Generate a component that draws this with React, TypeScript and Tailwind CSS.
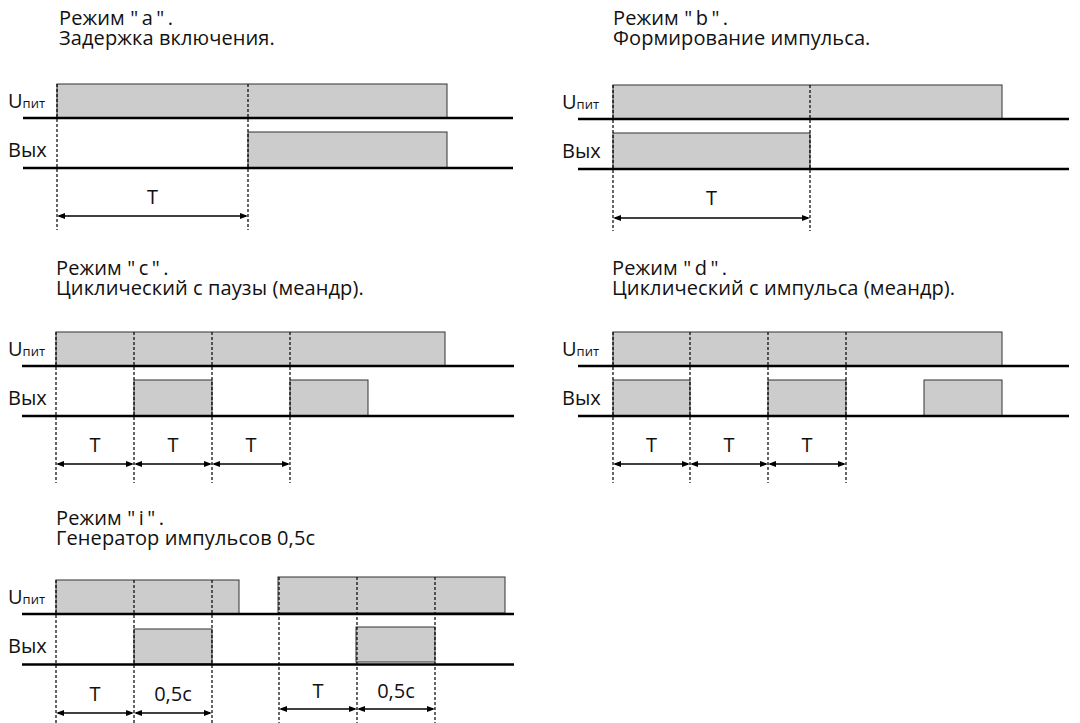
type Box = { x1: number; x2: number; top: number; bottom: number }
type Span = { x1: number; x2: number; y: number; label: string; ty: number }

interface ChartProps {
  width: number
  lineX: [number, number]
  upLine: number
  outLine: number
  up: Box[]
  out: Box[]
  dashes: { x: number; from: number }[]
  dashEnd: number
  spans: Span[]
  labelX: number
  labelDy?: number
}

function ArrowSpan({ x1, x2, y, label, ty }: Span) {
  const h = 8
  const w = 3
  return (
    <g>
      <line x1={x1 + 2} y1={y} x2={x2 - 2} y2={y} stroke="#000" strokeWidth={1.3} />
      <polygon points={`${x1},${y} ${x1 + h},${y - w} ${x1 + h},${y + w}`} fill="#000" />
      <polygon points={`${x2},${y} ${x2 - h},${y - w} ${x2 - h},${y + w}`} fill="#000" />
      <text x={(x1 + x2) / 2} y={ty} textAnchor="middle" fontSize={20} fill="#111">
        {label}
      </text>
    </g>
  )
}

function TimingChart(p: ChartProps) {
  const dy = p.labelDy ?? 0
  return (
    <svg
      width={p.width}
      height={184}
      viewBox={`0 64 ${p.width} 184`}
      className="block shrink-0 overflow-hidden font-['Open_Sans',sans-serif]"
    >
      {[...p.up, ...p.out].map((b, i) => (
        <rect
          key={i}
          x={b.x1}
          y={b.top}
          width={b.x2 - b.x1}
          height={b.bottom - b.top}
          fill="#cccccc"
          stroke="#333"
          strokeWidth={1}
        />
      ))}
      {p.dashes.map((d, i) => (
        <line
          key={i}
          x1={d.x}
          y1={d.from}
          x2={d.x}
          y2={p.dashEnd}
          stroke="#000"
          strokeWidth={1.2}
          strokeDasharray="3 2"
        />
      ))}
      <line x1={p.lineX[0]} y1={p.upLine} x2={p.lineX[1]} y2={p.upLine} stroke="#000" strokeWidth={2.5} />
      <line x1={p.lineX[0]} y1={p.outLine} x2={p.lineX[1]} y2={p.outLine} stroke="#000" strokeWidth={2.5} />
      {p.spans.map((s, i) => (
        <ArrowSpan key={i} {...s} />
      ))}
      <text x={p.labelX} y={108 + dy} fontSize={20} fill="#111">
        U<tspan fontSize={13}>пит</tspan>
      </text>
      <text x={p.labelX} y={157 + dy} fontSize={20} fill="#111">
        Вых
      </text>
    </svg>
  )
}

function Title({ mode, text, className }: { mode: string; text: string; className: string }) {
  return (
    <div className={`h-[64px] shrink-0 text-[20px] leading-[20px] tracking-[0.1px] text-[#111] ${className}`}>
      <div>{`Режим "\u2009${mode}\u2009"\u2009.`}</div>
      <div>{text}</div>
    </div>
  )
}

export default function App() {
  return (
    <div className="w-[1080px] h-[723px] overflow-hidden bg-white font-['Open_Sans',sans-serif] grid grid-cols-[556px_524px] grid-rows-[248px_248px_248px]">
      {/* режим a */}
      <div className="flex flex-col">
        <Title mode="a" text="Задержка включения." className="pt-[8px] pl-[59px]" />
        <TimingChart
          width={556}
          lineX={[23, 513]}
          upLine={118}
          outLine={168}
          up={[{ x1: 57, x2: 447, top: 84, bottom: 118 }]}
          out={[{ x1: 248, x2: 447, top: 132, bottom: 168 }]}
          dashes={[
            { x: 57, from: 84 },
            { x: 248, from: 84 },
          ]}
          dashEnd={230}
          spans={[{ x1: 57, x2: 248, y: 216, label: "T", ty: 204 }]}
          labelX={8}
        />
      </div>

      {/* режим b */}
      <div className="flex flex-col">
        <Title mode="b" text="Формирование импульса." className="pt-[8px] pl-[57px]" />
        <TimingChart
          width={524}
          lineX={[22, 513]}
          upLine={119}
          outLine={169}
          up={[{ x1: 57, x2: 446, top: 85, bottom: 119 }]}
          out={[{ x1: 57, x2: 254, top: 133, bottom: 169 }]}
          dashes={[
            { x: 57, from: 85 },
            { x: 254, from: 85 },
          ]}
          dashEnd={231}
          spans={[{ x1: 57, x2: 254, y: 218, label: "T", ty: 205 }]}
          labelX={6}
          labelDy={1}
        />
      </div>

      {/* режим c */}
      <div className="flex flex-col">
        <Title mode="с" text="Циклический с паузы (меандр)." className="pt-[10px] pl-[56px]" />
        <TimingChart
          width={556}
          lineX={[22, 514]}
          upLine={118}
          outLine={168}
          up={[{ x1: 56, x2: 445, top: 84, bottom: 118 }]}
          out={[
            { x1: 134, x2: 212, top: 132, bottom: 168 },
            { x1: 290, x2: 368, top: 132, bottom: 168 },
          ]}
          dashes={[56, 134, 212, 290].map((x) => ({ x, from: 84 }))}
          dashEnd={235}
          spans={[
            { x1: 56, x2: 134, y: 216, label: "T", ty: 204 },
            { x1: 134, x2: 212, y: 216, label: "T", ty: 204 },
            { x1: 212, x2: 290, y: 216, label: "T", ty: 204 },
          ]}
          labelX={8}
        />
      </div>

      {/* режим d */}
      <div className="flex flex-col">
        <Title mode="d" text="Циклический с импульса (меандр)." className="pt-[10px] pl-[56px]" />
        <TimingChart
          width={524}
          lineX={[22, 513]}
          upLine={118}
          outLine={168}
          up={[{ x1: 57, x2: 446, top: 84, bottom: 118 }]}
          out={[
            { x1: 57, x2: 134, top: 132, bottom: 168 },
            { x1: 212, x2: 290, top: 132, bottom: 168 },
            { x1: 368, x2: 446, top: 132, bottom: 168 },
          ]}
          dashes={[57, 134, 212, 290].map((x) => ({ x, from: 84 }))}
          dashEnd={235}
          spans={[
            { x1: 57, x2: 134, y: 216, label: "T", ty: 204 },
            { x1: 134, x2: 212, y: 216, label: "T", ty: 204 },
            { x1: 212, x2: 290, y: 216, label: "T", ty: 204 },
          ]}
          labelX={6}
        />
      </div>

      {/* режим i */}
      <div className="flex flex-col">
        <Title mode="i" text="Генератор импульсов 0,5с" className="pt-[12px] pl-[56px]" />
        <TimingChart
          width={556}
          lineX={[22, 514]}
          upLine={118}
          outLine={168.5}
          up={[
            { x1: 56, x2: 239, top: 84, bottom: 118 },
            { x1: 278, x2: 505, top: 81, bottom: 117 },
          ]}
          out={[
            { x1: 134, x2: 212, top: 133, bottom: 168 },
            { x1: 356, x2: 435, top: 131, bottom: 166 },
          ]}
          dashes={[
            { x: 56, from: 84 },
            { x: 134, from: 84 },
            { x: 212, from: 84 },
            { x: 279, from: 81 },
            { x: 357, from: 81 },
            { x: 435, from: 81 },
          ]}
          dashEnd={240}
          spans={[
            { x1: 56, x2: 134, y: 217, label: "T", ty: 205 },
            { x1: 134, x2: 212, y: 217, label: "0,5с", ty: 205 },
            { x1: 279, x2: 357, y: 213, label: "T", ty: 202 },
            { x1: 357, x2: 435, y: 213, label: "0,5с", ty: 202 },
          ]}
          labelX={8}
        />
      </div>
    </div>
  )
}
